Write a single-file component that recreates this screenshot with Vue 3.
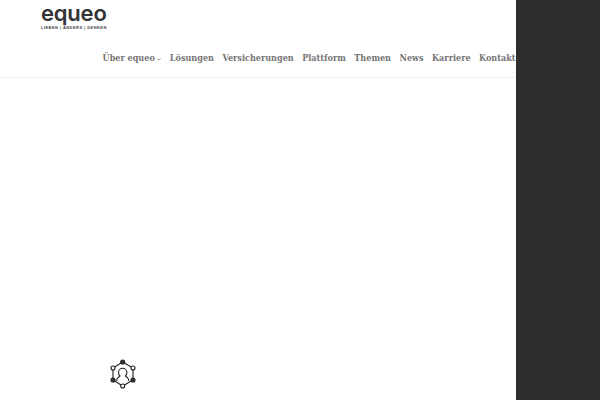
<script setup>
const items = ['Über equeo', 'Lösungen', 'Versicherungen', 'Plattform', 'Themen', 'News', 'Karriere', 'Kontakt']
const nodes = [
  { x: 14.7, y: 4, dark: true },
  { x: 25, y: 10, dark: false },
  { x: 25, y: 22, dark: true },
  { x: 14.7, y: 28, dark: false },
  { x: 5, y: 22, dark: true },
  { x: 5, y: 10, dark: false }
]
</script>

<template>
  <div class="page">
    <header class="header">
      <div class="logo">
        <div class="word">equeo</div>
        <div class="tag">LIEBEN | ANDERS | DENKEN</div>
      </div>
      <nav class="nav">
        <a v-for="(item, i) in items" :key="item" class="link">{{ item }}<svg v-if="i === 0" class="caret" width="4" height="3" viewBox="0 0 4 3" fill="none" stroke="#777" stroke-width="0.8"><path d="M0.3 0.5 2 2.2 3.7 0.5" /></svg></a>
      </nav>
    </header>
    <main class="main">
      <svg class="icon" width="30" height="32" viewBox="0 0 30 32" fill="none" stroke="#222" stroke-width="1.1">
        <polygon points="14.7,4 25,10 25,22 14.7,28 5,22 5,10" />
        <path d="M8.7 23c0-3 1.6-4 3.3-5c-1-1-1.5-2-1.5-3.5a4.2 4.2 0 0 1 8.4 0c0 1.5-.5 2.5-1.5 3.5c1.7 1 3.3 2 3.3 5" />
        <circle v-for="(n, i) in nodes" :key="i" :cx="n.x" :cy="n.y" r="2" :fill="n.dark ? '#2c3440' : '#fff'" />
      </svg>
    </main>
    <aside class="panel"></aside>
  </div>
</template>

<style>
html, body { margin: 0; background: #fff; overflow: hidden; }
</style>

<style scoped>
.page { position: relative; width: 600px; height: 400px; overflow: hidden; background: #fff; }
.header { height: 77px; border-bottom: 1px solid #f0f0f0; box-sizing: content-box; }
.logo { padding: 3px 0 0 41px; height: 33px; color: #333; }
.word { font: 600 22px/20px "Inter", sans-serif; letter-spacing: -0.2px; }
.tag { font: 700 4px/5px "Liberation Sans", sans-serif; letter-spacing: 0.45px; margin-top: 1.5px; color: #444; }
.nav { display: flex; gap: 8.5px; padding: 16px 0 0 102.6px; white-space: nowrap; }
.link { font: 700 9px/13px "DejaVu Serif Condensed", "DejaVu Serif", serif; font-stretch: condensed; color: #757575; }
.caret { margin-left: 2.5px; vertical-align: 0; }
.main { padding: 280px 0 0 108px; }
.icon { display: block; }
.panel { position: absolute; top: 0; right: 0; width: 84px; height: 400px; background: #2e2e2e; }
</style>
